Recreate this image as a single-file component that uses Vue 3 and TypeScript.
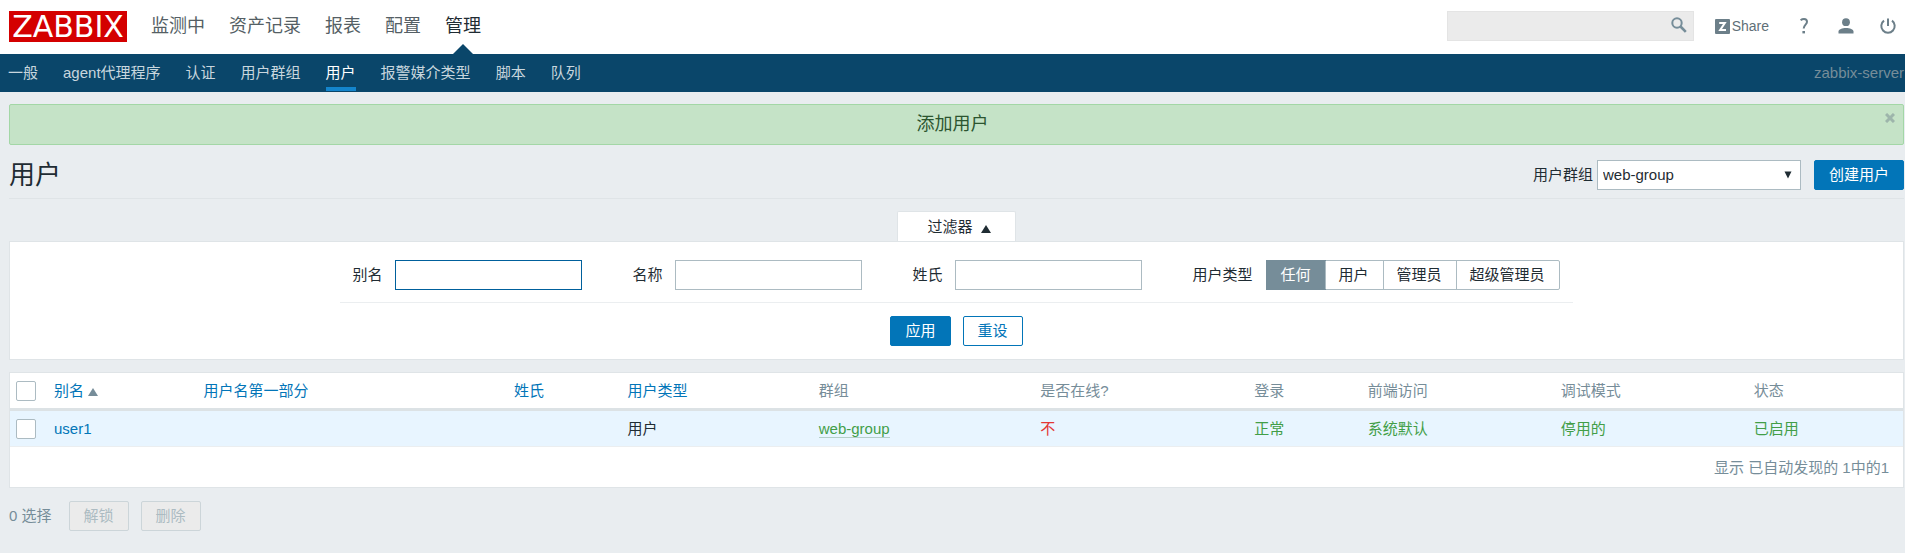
<script setup lang="ts">
import { reactive, ref } from 'vue'

interface Column {
  key: string
  title: string
  sortable: boolean
}

interface User {
  alias: string
  name: string
  surname: string
  type: string
  group: string
  online: string
  login: string
  frontend: string
  debug: string
  status: string
}

const mainMenu = ['监测中', '资产记录', '报表', '配置', '管理']
const activeMain = '管理'
const subMenu = ['一般', 'agent代理程序', '认证', '用户群组', '用户', '报警媒介类型', '脚本', '队列']
const activeSub = '用户'

const search = ref('')
const messageVisible = ref(true)
const group = ref('web-group')

const filterFields = [
  { key: 'alias', label: '别名' },
  { key: 'name', label: '名称' },
  { key: 'surname', label: '姓氏' },
]
const filter = reactive<Record<string, string>>({ alias: '', name: '', surname: '' })
const userTypes = ['任何', '用户', '管理员', '超级管理员']
const userType = ref('任何')

const columns: Column[] = [
  { key: 'alias', title: '别名', sortable: true },
  { key: 'name', title: '用户名第一部分', sortable: true },
  { key: 'surname', title: '姓氏', sortable: true },
  { key: 'type', title: '用户类型', sortable: true },
  { key: 'group', title: '群组', sortable: false },
  { key: 'online', title: '是否在线?', sortable: false },
  { key: 'login', title: '登录', sortable: false },
  { key: 'frontend', title: '前端访问', sortable: false },
  { key: 'debug', title: '调试模式', sortable: false },
  { key: 'status', title: '状态', sortable: false },
]

const users: User[] = [
  {
    alias: 'user1',
    name: '',
    surname: '',
    type: '用户',
    group: 'web-group',
    online: '不',
    login: '正常',
    frontend: '系统默认',
    debug: '停用的',
    status: '已启用',
  },
]

function resetFilter() {
  filter.alias = ''
  filter.name = ''
  filter.surname = ''
  userType.value = '任何'
}
</script>

<template>
  <div class="page">
    <header class="top">
      <a class="logo" href="#">ZABBIX</a>
      <nav class="main-nav">
        <a v-for="item in mainMenu" :key="item" href="#" :class="{ active: item === activeMain }">{{ item }}</a>
      </nav>
      <div class="tools">
        <form class="search" @submit.prevent>
          <input v-model="search" type="text" aria-label="搜索" />
          <button type="submit" aria-label="搜索">
            <svg width="16" height="16" viewBox="0 0 16 16" fill="none" stroke="#768d99">
              <circle cx="6" cy="6" r="4.7" stroke-width="2" />
              <path d="M9.5 9.5L14.8 14.8" stroke-width="2.6" />
            </svg>
          </button>
        </form>
        <a class="share" href="#">
          <svg width="15" height="15" viewBox="0 0 15 15">
            <rect width="15" height="15" rx="1" fill="#6c7f89" />
            <path d="M4.2 4.1H9.8L5.2 10.9H11" fill="none" stroke="#fff" stroke-width="2" />
          </svg>
          <span>Share</span>
        </a>
        <a class="icon" href="#" aria-label="帮助">
          <svg width="16" height="16" viewBox="0 0 16 16" fill="none" stroke="#6c7f89" stroke-width="2">
            <path d="M4.6 2.2C5.6 1.4 6.8 1 8 1C10 1 11 2.2 11 3.8C11 6.6 7.7 6.8 7.7 10.6" />
            <path d="M7.7 13V15.4" stroke-width="2.6" />
          </svg>
        </a>
        <a class="icon" href="#" aria-label="用户资料">
          <svg width="16" height="16" viewBox="0 0 16 16" fill="#6c7f89">
            <circle cx="8" cy="4.2" r="3.9" />
            <path d="M0.5 15.5V13.6C0.5 11.2 4.2 9.9 8 9.9S15.5 11.2 15.5 13.6V15.5Z" />
          </svg>
        </a>
        <a class="icon" href="#" aria-label="退出">
          <svg width="16" height="16" viewBox="0 0 16 16" fill="none" stroke="#6c7f89" stroke-width="2">
            <path d="M4 2.6A6.7 6.7 0 1 0 12 2.6" />
            <path d="M8 0.4V8" />
          </svg>
        </a>
      </div>
    </header>

    <nav class="sub-nav">
      <a v-for="item in subMenu" :key="item" href="#" :class="{ active: item === activeSub }">{{ item }}</a>
      <span class="server">zabbix-server</span>
    </nav>

    <main class="content">
      <div v-if="messageVisible" class="message" role="status">
        <span>添加用户</span>
        <button class="close" type="button" aria-label="关闭" @click="messageVisible = false">
          <svg width="10" height="10" viewBox="0 0 10 10" stroke="#9db5ab" stroke-width="3">
            <path d="M1 1L9 9M9 1L1 9" />
          </svg>
        </button>
      </div>

      <div class="title-row">
        <h1>用户</h1>
        <form class="title-form" @submit.prevent>
          <label for="group">用户群组</label>
          <div class="select">
            <select id="group" v-model="group">
              <option>web-group</option>
            </select>
            <svg width="8" height="8" viewBox="0 0 8 8" fill="#1f2c33"><path d="M0.5 0.5H7.5L4 7.5Z" /></svg>
          </div>
          <button class="btn primary" type="submit">创建用户</button>
        </form>
      </div>

      <section class="filter">
        <button class="filter-tab" type="button">
          过滤器
          <svg width="10" height="8" viewBox="0 0 10 8" fill="#1f2c33"><path d="M5 0L10 8H0Z" /></svg>
        </button>
        <form class="filter-panel" @submit.prevent>
          <div class="fields">
            <div v-for="field in filterFields" :key="field.key" class="field">
              <label :for="field.key">{{ field.label }}</label>
              <input
                :id="field.key"
                v-model="filter[field.key]"
                type="text"
                :class="{ current: field.key === 'alias' }"
              />
            </div>
            <div class="field">
              <span id="type-label">用户类型</span>
              <div class="segments" role="radiogroup" aria-labelledby="type-label">
                <label v-for="type in userTypes" :key="type" :class="{ on: type === userType }">
                  <input v-model="userType" type="radio" name="user-type" :value="type" />
                  {{ type }}
                </label>
              </div>
            </div>
          </div>
          <div class="filter-actions">
            <button class="btn primary" type="submit">应用</button>
            <button class="btn outline" type="button" @click="resetFilter">重设</button>
          </div>
        </form>
      </section>

      <div class="table-box">
        <table>
          <colgroup>
            <col class="c-check" />
            <col v-for="col in columns" :key="col.key" :class="'c-' + col.key" />
          </colgroup>
          <thead>
            <tr>
              <th class="check"><input type="checkbox" aria-label="全选" /></th>
              <th v-for="col in columns" :key="col.key" scope="col">
                <a v-if="col.sortable" href="#">{{ col.title }}</a>
                <template v-else>{{ col.title }}</template>
                <svg v-if="col.key === 'alias'" class="sort" width="10" height="8" viewBox="0 0 10 8" fill="#768d99">
                  <path d="M5 0L10 8H0Z" />
                </svg>
              </th>
            </tr>
          </thead>
          <tbody>
            <tr v-for="user in users" :key="user.alias">
              <td class="check"><input type="checkbox" :aria-label="user.alias" /></td>
              <td><a href="#">{{ user.alias }}</a></td>
              <td>{{ user.name }}</td>
              <td>{{ user.surname }}</td>
              <td>{{ user.type }}</td>
              <td><a class="group-link" href="#">{{ user.group }}</a></td>
              <td class="red">{{ user.online }}</td>
              <td class="green">{{ user.login }}</td>
              <td class="green">{{ user.frontend }}</td>
              <td class="green">{{ user.debug }}</td>
              <td><a class="green" href="#">{{ user.status }}</a></td>
            </tr>
          </tbody>
        </table>
        <div class="summary">显示 已自动发现的 1中的1</div>
      </div>

      <div class="bulk">
        <span>0 选择</span>
        <button class="btn" type="button" disabled>解锁</button>
        <button class="btn" type="button" disabled>删除</button>
      </div>
    </main>
  </div>
</template>

<style>
body {
  background: #e9edf0;
}
</style>

<style scoped>
.page,
.page * {
  box-sizing: border-box;
}

.page {
  color: #1f2c33;
  font: 15px/20px 'Liberation Sans', 'Noto Sans CJK SC', sans-serif;
}

.page input,
.page select,
.page button {
  font: inherit;
  color: inherit;
  margin: 0;
}

a {
  color: #0275b8;
  text-decoration: none;
}

svg {
  display: block;
  flex: none;
}

.top {
  display: flex;
  align-items: flex-start;
  height: 54px;
  padding: 11px 9px 0;
  background: #fff;
}

.logo {
  width: 118px;
  height: 31px;
  background: #d40000;
  color: #fff;
  font: 30px/31px 'DejaVu Sans', sans-serif;
  text-align: center;
}

.main-nav {
  display: flex;
  gap: 24px;
  margin-left: 24px;
}

.main-nav a {
  height: 43px;
  color: #555f65;
  font-size: 18px;
  line-height: 30px;
}

.main-nav .active {
  display: flex;
  flex-direction: column;
  justify-content: space-between;
  color: #1f2c33;
}

.main-nav .active::after {
  content: '';
  align-self: center;
  border: 10px solid transparent;
  border-top-width: 0;
  border-bottom-color: #0a466a;
}

.tools {
  display: flex;
  align-items: center;
  height: 30px;
  margin-left: auto;
}

.search {
  display: flex;
  align-items: center;
  width: 247px;
  height: 30px;
  padding-right: 6px;
  background: #ebebeb;
  border: 1px solid #e4e4e4;
}

.search input {
  flex: 1;
  min-width: 0;
  height: 28px;
  padding: 0 6px;
  background: none;
  border: 0;
}

.search button {
  padding: 0 0 3px;
  background: none;
  border: 0;
}

.share {
  display: flex;
  align-items: center;
  gap: 2px;
  margin: 0 27px 0 21px;
  color: #5f6f78;
  font-size: 14px;
}

.icon + .icon {
  margin-left: 26px;
}

.sub-nav {
  display: flex;
  gap: 25px;
  height: 38px;
  padding: 0 1px 0 8px;
  background: #0a466a;
}

.sub-nav a {
  height: 37px;
  color: #c8d6de;
  line-height: 37px;
}

.sub-nav .active {
  color: #fff;
  border-bottom: 4px solid #1485cc;
}

.server {
  margin-left: auto;
  color: #768d99;
  line-height: 38px;
}

.content {
  padding: 12px 1px 22px 9px;
}

.message {
  display: flex;
  justify-content: center;
  position: relative;
  height: 41px;
  padding-right: 8px;
  background: #c5e3c7;
  border: 1px solid #a3d7a6;
  border-radius: 2px;
  color: #2c5530;
  font-size: 18px;
  line-height: 39px;
}

.close {
  position: absolute;
  top: 8px;
  right: 8px;
  padding: 0;
  background: none;
  border: 0;
}

.title-row {
  display: flex;
  align-items: center;
  justify-content: space-between;
  height: 54px;
  padding-top: 6px;
  border-bottom: 1px solid #dfe4e7;
}

h1 {
  margin: 0;
  font-size: 26px;
  font-weight: 400;
  line-height: 30px;
}

.title-form {
  display: flex;
  align-items: center;
}

.select {
  position: relative;
  margin: 0 13px 0 4px;
}

.select select {
  display: block;
  width: 204px;
  height: 30px;
  padding: 0 5px;
  appearance: none;
  background: #fff;
  border: 1px solid #acbbc2;
  border-radius: 0;
}

.select svg {
  position: absolute;
  top: 11px;
  right: 9px;
  pointer-events: none;
}

.btn {
  height: 30px;
  padding: 0 14px;
  background: #ebebeb;
  border: 1px solid #0275b8;
  border-radius: 2px;
  line-height: 28px;
}

.page .primary {
  background: #0275b8;
  color: #fff;
}

.page .outline {
  background: #fff;
  color: #0275b8;
}

.page .btn:disabled {
  border-color: #ccd5d9;
  color: #acbbc2;
}

.filter {
  display: flex;
  flex-direction: column;
  align-items: center;
  margin-top: 13px;
}

.filter-tab {
  display: flex;
  align-items: center;
  gap: 8px;
  z-index: 1;
  height: 30px;
  margin-bottom: -1px;
  padding: 0 24px 0 29px;
  background: #fff;
  border: 1px solid #dfe4e7;
  border-bottom: 0;
  border-radius: 2px 2px 0 0;
}

.filter-tab svg {
  margin-top: 4px;
}

.filter-panel {
  display: flex;
  flex-direction: column;
  align-items: center;
  width: 100%;
  padding: 18px 0 13px;
  background: #fff;
  border: 1px solid #dfe4e7;
}

.fields {
  display: flex;
  gap: 50px;
  padding: 0 13px 12px 12px;
  border-bottom: 1px solid #ebeef0;
}

.field {
  display: flex;
  align-items: center;
  gap: 13px;
}

.field > input {
  width: 187px;
  height: 30px;
  padding: 0 5px;
  background: #fff;
  border: 1px solid #acbbc2;
}

.field > .current {
  border-color: #00609c;
}

.segments {
  display: flex;
  border: 1px solid #acbbc2;
  border-radius: 2px;
}

.segments label {
  height: 28px;
  padding: 0 14px;
  line-height: 28px;
}

.segments label + label {
  border-left: 1px solid #acbbc2;
  padding-left: 13px;
}

.segments input {
  position: absolute;
  opacity: 0;
  pointer-events: none;
}

.segments .on {
  background: #768d99;
  outline: 1px solid #768d99;
  color: #fff;
}

.filter-actions {
  display: flex;
  gap: 12px;
  margin-top: 13px;
}

.table-box {
  margin-top: 12px;
  background: #fff;
  border: 1px solid #dfe4e7;
}

.filter {
  margin-top: 12px;
}

table {
  width: 100%;
  table-layout: fixed;
  border-collapse: separate;
  border-spacing: 0;
}

.c-check { width: 38px; }
.c-alias { width: 7.9%; }
.c-name { width: 16.4%; }
.c-surname { width: 6%; }
.c-type { width: 10.1%; }
.c-group { width: 11.7%; }
.c-online { width: 11.3%; }
.c-login { width: 6%; }
.c-frontend { width: 10.2%; }
.c-debug { width: 10.2%; }

th,
td {
  height: 36px;
  padding: 0 6px;
  text-align: left;
  white-space: nowrap;
}

th {
  height: 38px;
  border-bottom: 3px solid #dce2e5;
  color: #768d99;
  font-weight: 400;
}

td {
  background: #e8f5ff;
  border-bottom: 1px solid #ebeef0;
}

.check input {
  display: block;
  width: 20px;
  height: 20px;
  appearance: none;
  background: #fff;
  border: 1px solid #acbbc2;
  border-radius: 2px;
}

.sort {
  display: inline-block;
  margin-left: 4px;
}

.red {
  color: #e33734;
}

.green,
.group-link {
  color: #429e47;
}

.group-link {
  display: inline-block;
  height: 19px;
  border-bottom: 1px solid #b5cfc9;
}

.summary {
  height: 40px;
  padding-right: 14px;
  color: #768d99;
  line-height: 42px;
  text-align: right;
}

.bulk {
  display: flex;
  align-items: center;
  gap: 12px;
  margin-top: 13px;
}

.bulk span {
  margin-right: 5px;
  color: #768d99;
}
</style>
